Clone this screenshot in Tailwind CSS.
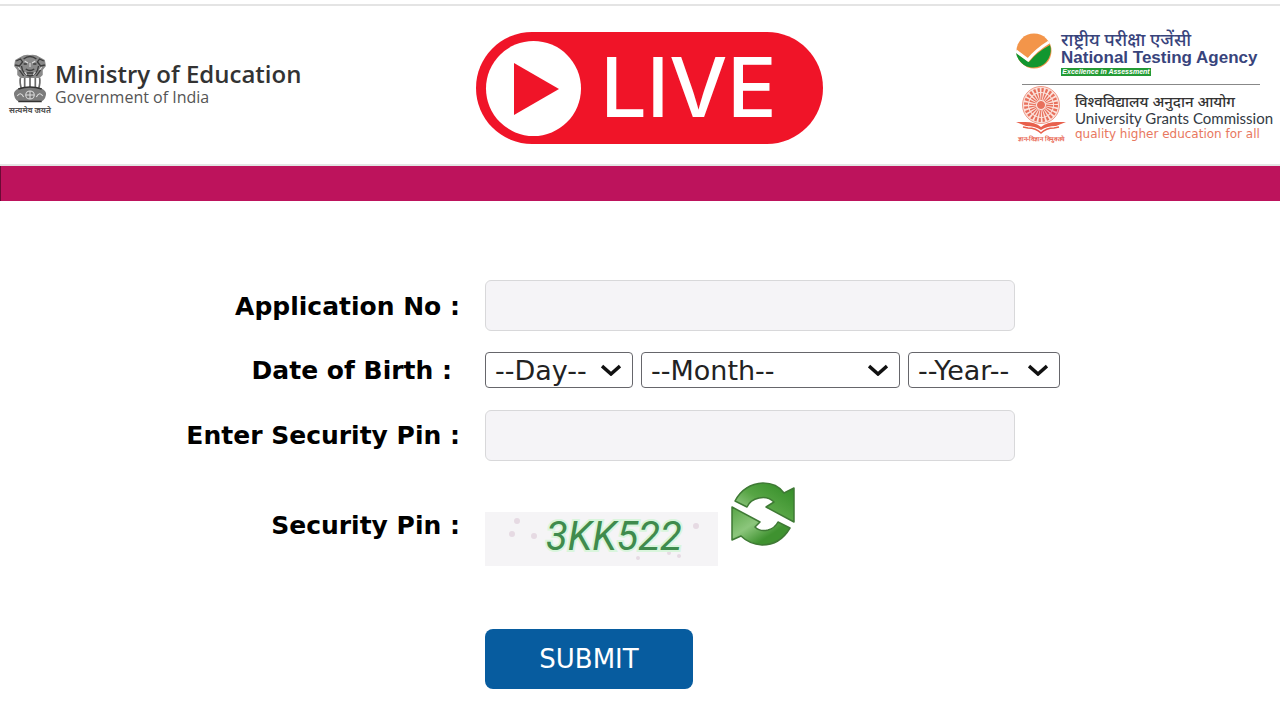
<!DOCTYPE html>
<html lang="en">
<head>
    <meta charset="UTF-8">
    <meta name="viewport" content="width=device-width, initial-scale=1.0">
    <title>National Testing Agency - Result Login</title>
    <script src="https://cdn.jsdelivr.net/npm/@tailwindcss/browser@4"></script>
</head>
<body class="bg-white min-h-screen text-black font-['DejaVu_Sans',sans-serif]">
    <header class="mt-1 h-[162px] border-y-2 border-[#e4e4e4] pl-2 pr-1.5 flex items-start justify-between">
        <!-- Ministry -->
        <div class="flex-1 flex items-start pt-12 font-['Open_Sans','Noto_Sans',sans-serif]">
            <div class="w-11 flex flex-col items-center">
                <svg class="w-[34px] h-[50px]" viewBox="0 0 32 50" preserveAspectRatio="none" fill="none">
                    <path d="M7 3q4-3 9-2q5-1 9 2l5 3l1 6l-3 4v5l-3 3H7l-3-3v-5l-3-4l1-6z" fill="#8a8a8a"/>
                    <path d="M3 7l4-2l2 3l-3 4l-4-1M29 7l-4-2l-2 3l3 4l4-1M10 5q6-5 12 0M10 10h3m6 0h3M12 15q4 3 8 0M8 12q1 9 8 10q7-1 8-10M6 16l4 6M26 16l-4 6M13 19h6" stroke="#3c3c3c" stroke-width="1.3"/>
                    <path d="M11 7l3 2m7-2l-3 2M16 9v4M5 13l2 3m20-3l-2 3M11 18l2 3m8-3l-2 3" stroke="#ddd" stroke-width="1"/>
                    <path d="M7 24q-1 4 1 11M11 24v11M16 23v12M21 24v11M25 24q1 4-1 11" stroke="#6a6a6a" stroke-width="1.6"/>
                    <path d="M6 34Q0 37 1 41Q2 47 7 48H25Q30 47 31 41Q32 37 26 34Q16 32 6 34z" fill="#7c7c7c"/>
                    <path d="M5 35q11-4 22 0M5 47.500h22" stroke="#333" stroke-width="1.6"/>
                    <circle cx="16" cy="41" r="4" fill="#777" stroke="#ddd"/>
                    <path d="M16 37v8M12 41h8M4 42q3-5 6 1M28 42q-3-5-6 1" stroke="#ddd"/>
                </svg>
                <span class="text-[8px] leading-3 font-bold text-[#555] whitespace-nowrap">सत्यमेव जयते</span>
            </div>
            <div class="pl-[3px] pt-[6px]">
                <p class="text-[24px] leading-7 font-semibold text-[#333]">Ministry of Education</p>
                <p class="text-[16px] leading-[18px] text-[#555]">Government of India</p>
            </div>
        </div>

        <!-- Live badge -->
        <div class="mt-[26px] ml-4 w-[347px] h-28 rounded-full bg-[#f01428] flex items-center pl-[10px]">
            <div class="w-[95px] h-[95px] rounded-full bg-white shrink-0">
                <svg class="w-full h-full" viewBox="0 0 95 95" fill="#f01428">
                    <path d="M28 22L73 48L28 74z"/>
                </svg>
            </div>
            <span class="pl-5 text-[82px] leading-none font-medium text-white font-['Inter',sans-serif]">LIVE</span>
        </div>

        <!-- Agency logos -->
        <div class="flex-1 flex justify-end">
            <div class="pt-6 w-[258px] whitespace-nowrap">
                <div class="flex items-start h-[54px]">
                    <svg class="w-9 h-9 mt-[3px] mr-[9px]" viewBox="0 0 36 36">
                        <circle cx="18" cy="18" r="17.5" fill="#f3954a"/>
                        <path d="M0 20L13 29Q21 19 34 12A17.500 17.500 0 1 1 0 20z" fill="#12962f"/>
                        <path d="M0 18L12 27Q20 17 33 9" fill="none" stroke="#fff" stroke-width="3"/>
                    </svg>
                    <div class="text-[#38447c]">
                        <p class="text-[18px] leading-[18px] font-medium font-['Noto_Sans',sans-serif]">राष्ट्रीय परीक्षा एजेंसी</p>
                        <p class="text-[17px] leading-5 font-bold font-['Liberation_Sans',sans-serif]">National Testing Agency</p>
                        <p class="w-[90px] h-2 bg-[#239b35] text-center text-[7px] leading-2 font-bold italic text-white font-['Liberation_Sans',sans-serif]">Excellence in Assessment</p>
                    </div>
                </div>
                <div class="w-[238px] ml-1.5 border-t border-[#888]"></div>
                <div class="flex items-start">
                    <div class="w-[50px] mr-[9px] flex flex-col items-center">
                        <svg class="w-[50px] h-[50px]" viewBox="0 0 50 50" fill="none" stroke="#e8705c">
                            <circle cx="25" cy="20" r="18.500" fill="#fbe3dc" stroke="#f09a88"/>
                            <circle cx="25" cy="20" r="15" stroke-width="4" stroke-dasharray="2.200 1.730"/>
                            <circle cx="25" cy="20" r="8.500" stroke-width="7" stroke-dasharray="1.200 1.025"/>
                            <circle cx="25" cy="20" r="3.500" fill="#e8705c"/>
                            <path d="M0 37H9Q19 37 25 42Q31 37 41 37H50L40 41Q31 41 25 45Q19 41 10 41z" fill="#e8604c" stroke="none"/>
                            <path d="M7 42L12 43Q20 43 25 48Q30 43 38 43L43 42" stroke="#e8604c" stroke-width="1.500"/>
                        </svg>
                        <span class="text-[6px] leading-2 font-bold text-[#e8604c]">ज्ञान-विज्ञान विमुक्तये</span>
                    </div>
                    <div class="pt-2">
                        <p class="text-[15px] leading-[17px] font-medium text-[#333] font-['Noto_Sans',sans-serif]">विश्वविद्यालय अनुदान आयोग</p>
                        <p class="text-[15px] leading-[17px] text-[#333a44] font-['Lato',sans-serif]">University Grants Commission</p>
                        <p class="text-[12px] leading-[14px] text-[#e87860]">quality higher education for all</p>
                    </div>
                </div>
            </div>
        </div>
    </header>
    <div class="h-[35px] bg-[#bd135c] border-l border-[#6b0a35]"></div>

    <!-- Login form -->
    <form class="pt-[79px] grid grid-cols-[460px_1fr] gap-x-[25px] items-center text-[25px] leading-9">
        <label for="application-no" class="pt-0.5 text-right font-bold">Application No :</label>
        <input id="application-no" type="text" class="w-[530px] h-[51px] rounded-md border border-[#d8d8da] bg-[#f5f4f7] px-3">

        <label for="day" class="mt-5 pt-0.5 pr-2 text-right font-bold">Date of Birth :</label>
        <div class="mt-5 flex gap-2 text-[27px]">
            <div class="relative">
                <select id="day" class="appearance-none block w-[148px] h-9 rounded-sm border border-[#66666b] bg-white pl-[9px] pt-0.5 text-[#222] leading-8">
                    <option>--Day--</option>
                </select>
                <svg class="absolute right-3 top-3 w-5 h-3 pointer-events-none" viewBox="0 0 20 12" fill="none" stroke="#111" stroke-width="3.500"><path d="M1 2L10 10L19 2"/></svg>
            </div>
            <div class="relative">
                <select aria-label="Month" class="appearance-none block w-[259px] h-9 rounded-sm border border-[#66666b] bg-white pl-[9px] pt-0.5 text-[#222] leading-8">
                    <option>--Month--</option>
                </select>
                <svg class="absolute right-3 top-3 w-5 h-3 pointer-events-none" viewBox="0 0 20 12" fill="none" stroke="#111" stroke-width="3.500"><path d="M1 2L10 10L19 2"/></svg>
            </div>
            <div class="relative">
                <select aria-label="Year" class="appearance-none block w-[152px] h-9 rounded-sm border border-[#66666b] bg-white pl-[9px] pt-0.5 text-[#222] leading-8">
                    <option>--Year--</option>
                </select>
                <svg class="absolute right-3 top-3 w-5 h-3 pointer-events-none" viewBox="0 0 20 12" fill="none" stroke="#111" stroke-width="3.500"><path d="M1 2L10 10L19 2"/></svg>
            </div>
        </div>

        <label for="security-pin" class="mt-[21px] text-right font-bold">Enter Security Pin :</label>
        <input id="security-pin" type="text" class="mt-[21px] w-[530px] h-[51px] rounded-md border border-[#d8d8da] bg-[#f5f4f7] px-3">

        <p class="mt-6 text-right font-bold">Security Pin :</p>
        <div class="mt-[21px] flex items-start gap-3">
            <svg class="mt-[30px] w-[233px] h-[54px] bg-[#f5f4f6]" viewBox="0 0 233 54">
                <g fill="#e6dae3"><circle cx="32" cy="9" r="3"/><circle cx="27" cy="22" r="3"/><circle cx="49" cy="24" r="3"/><circle cx="211" cy="14" r="3"/><circle cx="153" cy="46" r="2"/><circle cx="184" cy="41" r="2"/><circle cx="194" cy="44" r="2"/></g>
                <text x="61" y="38" font-family="Roboto" font-size="40" font-style="italic" fill="#3f8b4d" stroke="#d9f5dc" stroke-width="4" paint-order="stroke">3KK522</text>
            </svg>
            <button type="button" aria-label="Refresh security pin">
                <svg class="w-[66px] h-[66px]" viewBox="0 0 66 66">
                    <defs>
                        <linearGradient id="leaf" x1="0" y1="1" x2="1" y2="0">
                            <stop offset="0" stop-color="#b9dfac"/><stop offset="0.5" stop-color="#57a545"/><stop offset="1" stop-color="#2f8a24"/>
                        </linearGradient>
                        <linearGradient id="leaf-dark" x1="0" y1="0" x2="1" y2="1">
                            <stop offset="0" stop-color="#57a545"/><stop offset="0.4" stop-color="#8cc67c"/><stop offset="0.7" stop-color="#3f9230"/>
                        </linearGradient>
                    </defs>
                    <g stroke="#3f7a35" stroke-width="1.5" stroke-linejoin="round">
                        <path fill="url(#leaf)" d="M5 19Q14 2 33 1Q47 1 54 11L64 6V40L36 25L44 20Q38 14 29 16Q20 18 17 25z"/>
                        <path fill="url(#leaf-dark)" d="M60 46Q50 63 32 63Q19 62 11 54L2 58V25L30 40L25 45Q30 50 38 48Q45 46 48 40z"/>
                    </g>
                </svg>
            </button>
        </div>

        <button type="submit" class="col-start-2 mt-[63px] w-52 h-[60px] rounded-lg bg-[#075c9f] text-[26px] text-white">SUBMIT</button>
    </form>
</body>
</html>
